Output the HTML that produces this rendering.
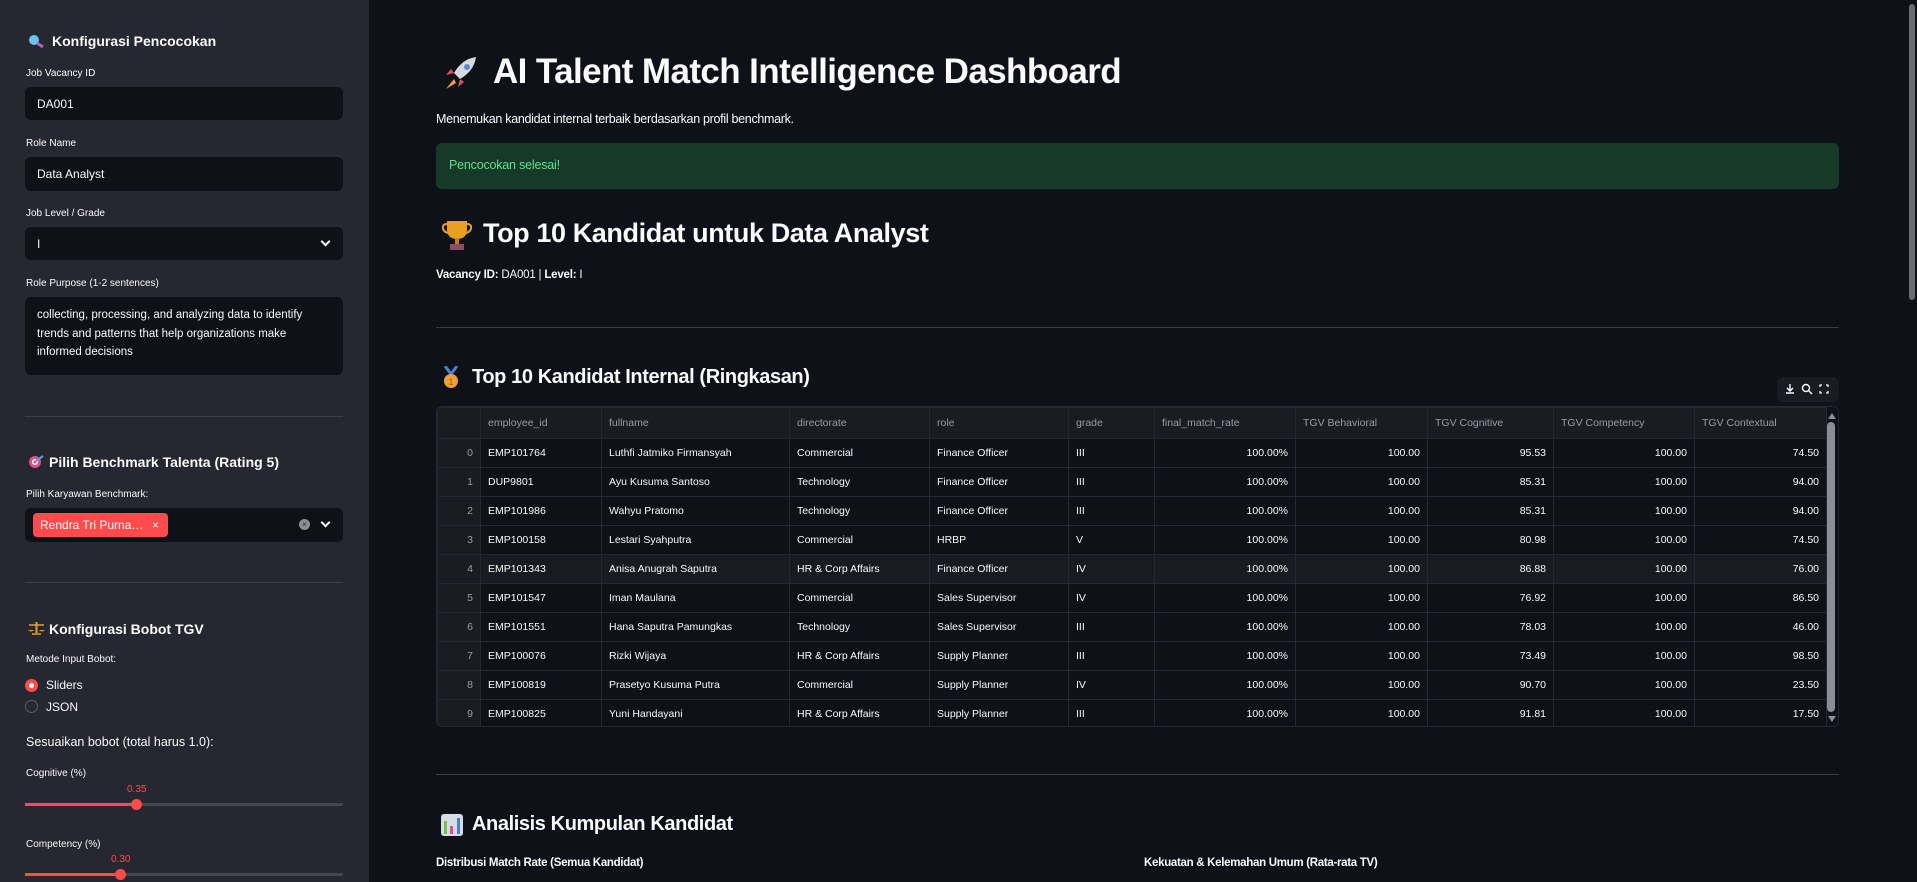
<!DOCTYPE html>
<html><head><meta charset="utf-8"><style>
*{margin:0;padding:0;box-sizing:border-box}
body{width:1917px;height:882px;overflow:hidden;background:#0e1117;font-family:"Liberation Sans",sans-serif;color:#fafafa;position:relative}
.a{position:absolute;white-space:nowrap}
#sb{position:absolute;left:0;top:0;width:369px;height:882px;background:#262730}
.h{font-weight:bold;font-size:14px;line-height:16px}
.lb{font-size:10px;line-height:12px;color:#fafafa}
.in{position:absolute;left:25px;width:318px;background:#0e1117;border-radius:6px;font-size:12px;color:#fafafa}
.hr{position:absolute;height:1px;background:#3d3f47}
.chev{position:absolute;width:7px;height:7px;border-right:2px solid #fafafa;border-bottom:2px solid #fafafa;transform:rotate(45deg)}
table{border-collapse:collapse;font-size:10.5px;table-layout:fixed}
td,th{border:1px solid #262730;height:29px;padding:0 7px;white-space:nowrap;overflow:hidden}
th{font-weight:normal;color:#9a9ca4;text-align:left;height:31px;background:#1a1c24}
td.r{text-align:right}
td.i{text-align:right;color:#9a9ca4;background:#1a1c24}
</style></head><body>
<div id="sb">
 <svg class="a" style="left:28px;top:34px" width="16" height="14"><circle cx="6" cy="6" r="5" fill="#6ac4f0"/><line x1="9" y1="9" x2="15" y2="13" stroke="#a06ab4" stroke-width="3"/></svg>
 <div class="a h" style="left:52px;top:33px">Konfigurasi Pencocokan</div>
 <div class="a lb" style="left:26px;top:68px">Job Vacancy ID</div>
 <div class="in" style="top:87px;height:33px;padding:10px 12px">DA001</div>
 <div class="a lb" style="left:26px;top:138px">Role Name</div>
 <div class="in" style="top:157px;height:34px;padding:10px 12px">Data Analyst</div>
 <div class="a lb" style="left:26px;top:208px">Job Level / Grade</div>
 <div class="in" style="top:227px;height:33px;padding:10px 12px">I</div>
 <div class="chev" style="left:322px;top:238px"></div>
 <div class="a lb" style="left:26px;top:278px">Role Purpose (1-2 sentences)</div>
 <div class="in" style="top:297px;height:78px;padding:9px 14px 0 12px;font-size:11.5px;line-height:18.5px;white-space:normal;letter-spacing:0">collecting, processing, and analyzing data to identify trends and patterns that help organizations make informed decisions</div>
 <div class="hr" style="left:25px;top:416px;width:318px"></div>
 <svg class="a" style="left:28px;top:455px" width="16" height="14"><circle cx="7" cy="7" r="6" fill="#e0508a"/><circle cx="7" cy="7" r="3" fill="#fff"/><circle cx="7" cy="7" r="1.5" fill="#e0508a"/><line x1="8" y1="6" x2="15" y2="1" stroke="#5aa0e0" stroke-width="2"/></svg>
 <div class="a h" style="left:49px;top:454px">Pilih Benchmark Talenta (Rating 5)</div>
 <div class="a lb" style="left:26px;top:489px">Pilih Karyawan Benchmark:</div>
 <div class="in" style="top:508px;height:34px"></div>
 <div class="a" style="left:33px;top:513px;width:135px;height:24px;background:#ff4b4b;border-radius:4px;font-size:12px;line-height:24px;padding-left:7px;color:#fff">Rendra Tri Purna… <span style="position:absolute;left:119px">×</span></div>
 <div class="a" style="left:299px;top:519px;width:11px;height:11px;border-radius:50%;background:#8b8d94;font-size:8px;line-height:11px;text-align:center;color:#262730">×</div>
 <div class="chev" style="left:322px;top:519px"></div>
 <div class="hr" style="left:25px;top:582px;width:318px"></div>
 <svg class="a" style="left:28px;top:621px" width="17" height="14"><line x1="8.5" y1="1" x2="8.5" y2="12" stroke="#e0a030" stroke-width="2"/><line x1="1" y1="4" x2="16" y2="4" stroke="#e0a030" stroke-width="1.5"/><path d="M0 9 Q3 12 6 9Z M11 9 Q14 12 17 9Z" fill="#e0a030"/><rect x="4" y="12" width="9" height="2" fill="#c08020"/></svg>
 <div class="a h" style="left:49px;top:621px">Konfigurasi Bobot TGV</div>
 <div class="a lb" style="left:26px;top:654px">Metode Input Bobot:</div>
 <div class="a" style="left:25px;top:679px;width:13px;height:13px;border-radius:50%;background:#ff4b4b"><div style="position:absolute;left:4px;top:4px;width:5px;height:5px;border-radius:50%;background:#fff"></div></div>
 <div class="a" style="left:46px;top:678px;font-size:12px">Sliders</div>
 <div class="a" style="left:25px;top:700px;width:13px;height:13px;border-radius:50%;border:1px solid #5a5c64"></div>
 <div class="a" style="left:46px;top:700px;font-size:12px">JSON</div>
 <div class="a" style="left:26px;top:735px;font-size:12.5px">Sesuaikan bobot (total harus 1.0):</div>
 <div class="a lb" style="left:26px;top:768px">Cognitive (%)</div>
 <div class="a" style="left:127px;top:784px;font-size:10px;color:#ff4b4b">0.35</div>
 <div class="a" style="left:25px;top:803px;width:318px;height:3px;background:#45464e;border-radius:2px"></div>
 <div class="a" style="left:25px;top:803px;width:111px;height:3px;background:#ff4b4b"></div>
 <div class="a" style="left:131px;top:799px;width:11px;height:11px;border-radius:50%;background:#ff4b4b"></div>
 <div class="a lb" style="left:26px;top:839px">Competency (%)</div>
 <div class="a" style="left:111px;top:854px;font-size:10px;color:#ff4b4b">0.30</div>
 <div class="a" style="left:25px;top:873px;width:318px;height:3px;background:#45464e;border-radius:2px"></div>
 <div class="a" style="left:25px;top:873px;width:95px;height:3px;background:#ff4b4b"></div>
 <div class="a" style="left:115px;top:869px;width:11px;height:11px;border-radius:50%;background:#ff4b4b"></div>
</div>

<svg class="a" style="left:442px;top:55px" width="38" height="36"><path d="M34 2 Q20 4 12 18 L18 24 Q32 16 34 2Z" fill="#d8d8e0"/><circle cx="25" cy="12" r="3" fill="#5a8ad0"/><path d="M12 18 L4 20 L9 14Z M18 24 L16 32 L22 27Z" fill="#e05060"/><path d="M12 24 L4 34 L14 28Z" fill="#f0a040"/></svg>
<div class="a" style="left:493px;top:52px;font-size:35px;font-weight:bold;letter-spacing:-0.6px">AI Talent Match Intelligence Dashboard</div>
<div class="a" style="left:436px;top:112px;font-size:12.5px;letter-spacing:-0.3px">Menemukan kandidat internal terbaik berdasarkan profil benchmark.</div>
<div class="a" style="left:436px;top:143px;width:1403px;height:46px;background:#173928;border-radius:6px"></div>
<div class="a" style="left:449px;top:158px;font-size:12.5px;color:#5ee08a;letter-spacing:-0.2px">Pencocokan selesai!</div>
<svg class="a" style="left:442px;top:219px" width="30" height="32"><path d="M5 2 H25 V10 Q25 20 15 20 Q5 20 5 10Z" fill="#e8a020"/><path d="M5 5 Q0 5 1 10 Q3 14 7 14 M25 5 Q30 5 29 10 Q27 14 23 14" stroke="#e8a020" stroke-width="2" fill="none"/><rect x="13" y="19" width="4" height="6" fill="#c08018"/><rect x="8" y="25" width="14" height="6" fill="#8a5060"/></svg>
<div class="a" style="left:483px;top:218px;font-size:27px;font-weight:bold;letter-spacing:-0.4px">Top 10 Kandidat untuk Data Analyst</div>
<div class="a" style="left:436px;top:269px;font-size:11.5px;letter-spacing:-0.2px"><b>Vacancy ID:</b> DA001 | <b>Level:</b> I</div>
<div class="hr" style="left:436px;top:327px;width:1403px;background:#3a3c42"></div>
<svg class="a" style="left:442px;top:366px" width="18" height="24"><path d="M3 0 L9 8 L15 0" stroke="#4a80d0" stroke-width="3" fill="none"/><circle cx="9" cy="15" r="7" fill="#f0a030"/><text x="9" y="19" font-size="9" text-anchor="middle" fill="#a05a10" font-family="Liberation Sans">1</text></svg>
<div class="a" style="left:472px;top:366px;font-size:20px;font-weight:bold;letter-spacing:-0.4px">Top 10 Kandidat Internal (Ringkasan)</div>

<div class="a" style="left:1777px;top:377px;width:62px;height:25px;background:#1a1c24;border-radius:6px"></div>
<svg class="a" style="left:1784px;top:382px" width="50" height="14"><path d="M6 2 V9 M3 6 L6 9 L9 6 M2 11 H10" stroke="#fafafa" stroke-width="1.4" fill="none"/><circle cx="22" cy="6" r="3.5" stroke="#fafafa" stroke-width="1.4" fill="none"/><line x1="24.5" y1="8.5" x2="28" y2="12" stroke="#fafafa" stroke-width="1.4"/><path d="M36 5 V3 H38 M42 3 H44 V5 M44 9 V11 H42 M38 11 H36 V9" stroke="#fafafa" stroke-width="1.3" fill="none"/></svg>

<div class="a" style="left:436px;top:406px;width:1403px;height:321px;border:1px solid #262730;border-radius:6px;overflow:hidden">
<table style="width:1389px">
<colgroup><col style="width:43px"><col style="width:121px"><col style="width:188px"><col style="width:140px"><col style="width:139px"><col style="width:86px"><col style="width:141px"><col style="width:132px"><col style="width:126px"><col style="width:141px"><col style="width:132px"></colgroup>
<tr><th></th><th>employee_id</th><th>fullname</th><th>directorate</th><th>role</th><th>grade</th><th>final_match_rate</th><th>TGV Behavioral</th><th>TGV Cognitive</th><th>TGV Competency</th><th>TGV Contextual</th></tr>
<tr><td class="i">0</td><td>EMP101764</td><td>Luthfi Jatmiko Firmansyah</td><td>Commercial</td><td>Finance Officer</td><td>III</td><td class="r">100.00%</td><td class="r">100.00</td><td class="r">95.53</td><td class="r">100.00</td><td class="r">74.50</td></tr>
<tr><td class="i">1</td><td>DUP9801</td><td>Ayu Kusuma Santoso</td><td>Technology</td><td>Finance Officer</td><td>III</td><td class="r">100.00%</td><td class="r">100.00</td><td class="r">85.31</td><td class="r">100.00</td><td class="r">94.00</td></tr>
<tr><td class="i">2</td><td>EMP101986</td><td>Wahyu Pratomo</td><td>Technology</td><td>Finance Officer</td><td>III</td><td class="r">100.00%</td><td class="r">100.00</td><td class="r">85.31</td><td class="r">100.00</td><td class="r">94.00</td></tr>
<tr><td class="i">3</td><td>EMP100158</td><td>Lestari Syahputra</td><td>Commercial</td><td>HRBP</td><td>V</td><td class="r">100.00%</td><td class="r">100.00</td><td class="r">80.98</td><td class="r">100.00</td><td class="r">74.50</td></tr>
<tr style="background:#191b22"><td class="i">4</td><td>EMP101343</td><td>Anisa Anugrah Saputra</td><td>HR &amp; Corp Affairs</td><td>Finance Officer</td><td>IV</td><td class="r">100.00%</td><td class="r">100.00</td><td class="r">86.88</td><td class="r">100.00</td><td class="r">76.00</td></tr>
<tr><td class="i">5</td><td>EMP101547</td><td>Iman Maulana</td><td>Commercial</td><td>Sales Supervisor</td><td>IV</td><td class="r">100.00%</td><td class="r">100.00</td><td class="r">76.92</td><td class="r">100.00</td><td class="r">86.50</td></tr>
<tr><td class="i">6</td><td>EMP101551</td><td>Hana Saputra Pamungkas</td><td>Technology</td><td>Sales Supervisor</td><td>III</td><td class="r">100.00%</td><td class="r">100.00</td><td class="r">78.03</td><td class="r">100.00</td><td class="r">46.00</td></tr>
<tr><td class="i">7</td><td>EMP100076</td><td>Rizki Wijaya</td><td>HR &amp; Corp Affairs</td><td>Supply Planner</td><td>III</td><td class="r">100.00%</td><td class="r">100.00</td><td class="r">73.49</td><td class="r">100.00</td><td class="r">98.50</td></tr>
<tr><td class="i">8</td><td>EMP100819</td><td>Prasetyo Kusuma Putra</td><td>Commercial</td><td>Supply Planner</td><td>IV</td><td class="r">100.00%</td><td class="r">100.00</td><td class="r">90.70</td><td class="r">100.00</td><td class="r">23.50</td></tr>
<tr><td class="i">9</td><td>EMP100825</td><td>Yuni Handayani</td><td>HR &amp; Corp Affairs</td><td>Supply Planner</td><td>III</td><td class="r">100.00%</td><td class="r">100.00</td><td class="r">91.81</td><td class="r">100.00</td><td class="r">17.50</td></tr>
</table>
<div class="a" style="left:1391px;top:6px;width:0;height:0;border-left:4px solid transparent;border-right:4px solid transparent;border-bottom:6px solid #8b8d94"></div>
<div class="a" style="left:1390px;top:15px;width:8px;height:290px;background:#8b8d94;border-radius:4px"></div>
<div class="a" style="left:1391px;top:309px;width:0;height:0;border-left:4px solid transparent;border-right:4px solid transparent;border-top:6px solid #8b8d94"></div>
</div>

<div class="hr" style="left:436px;top:774px;width:1403px;background:#3a3c42"></div>
<svg class="a" style="left:440px;top:813px" width="24" height="24"><rect x="1" y="1" width="22" height="22" rx="3" fill="#d8dce4"/><rect x="4" y="8" width="3" height="13" fill="#7ac050"/><rect x="10" y="13" width="3" height="8" fill="#e0508a"/><rect x="17" y="5" width="3" height="16" fill="#4a80d0"/></svg>
<div class="a" style="left:472px;top:813px;font-size:20px;font-weight:bold;letter-spacing:-0.4px">Analisis Kumpulan Kandidat</div>
<div class="a" style="left:436px;top:857px;font-size:11.5px;font-weight:bold;letter-spacing:-0.3px">Distribusi Match Rate (Semua Kandidat)</div>
<div class="a" style="left:1144px;top:857px;font-size:11.5px;font-weight:bold;letter-spacing:-0.3px">Kekuatan &amp; Kelemahan Umum (Rata-rata TV)</div>
<div class="a" style="left:1909px;top:4px;width:6px;height:296px;background:#6b6c70;border-radius:3px"></div>
</body></html>
